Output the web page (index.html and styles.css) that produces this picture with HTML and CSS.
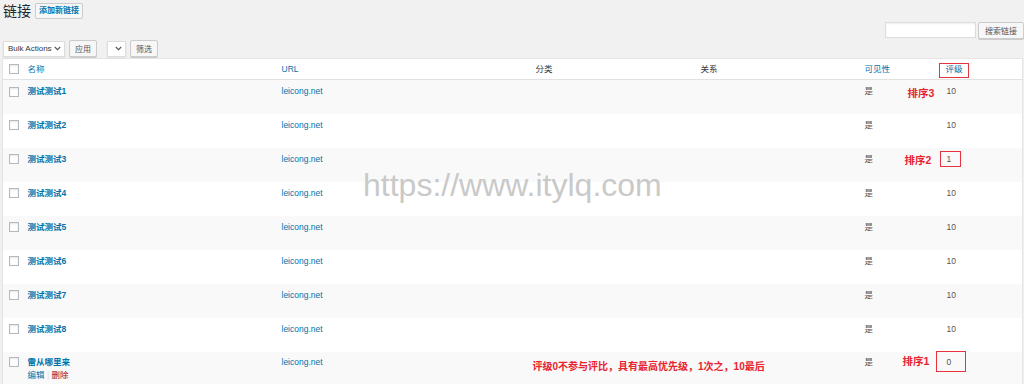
FILE: index.html
```html
<!DOCTYPE html>
<html lang="zh-CN">
<head>
    <meta charset="UTF-8">
    <title>链接</title>
    <link rel="stylesheet" href="styles.css">
</head>
<body>
    <div class="wrap">
        <div class="title-row">
            <h1>链接</h1>
            <a class="add-new">添加新链接</a>
        </div>

        <div class="search-row">
            <input class="search-input" type="text">
            <span class="btn">搜索链接</span>
        </div>

        <div class="tablenav">
            <span class="select bulk">Bulk Actions
                <svg width="7" height="5" viewBox="0 0 7 5"><path d="M0.8 1 L3.5 3.7 L6.2 1" fill="none" stroke="#555" stroke-width="1.1"/></svg>
            </span>
            <span class="btn">应用</span>
            <span class="select cat">
                <svg width="7" height="5" viewBox="0 0 7 5"><path d="M0.8 1 L3.5 3.7 L6.2 1" fill="none" stroke="#555" stroke-width="1.1"/></svg>
            </span>
            <span class="btn">筛选</span>
        </div>

        <table class="links">
            <colgroup>
                <col class="c-cb">
                <col class="c-name">
                <col class="c-url">
                <col class="c-cat">
                <col class="c-rel">
                <col class="c-vis">
                <col class="c-rate">
            </colgroup>
            <thead>
                <tr>
                    <th><span class="cb"></span></th>
                    <th class="link">名称</th>
                    <th class="link">URL</th>
                    <th>分类</th>
                    <th>关系</th>
                    <th class="link">可见性</th>
                    <th class="link"><span class="rate-head">评级<span class="mark mark-head"></span></span></th>
                </tr>
            </thead>
            <tbody>
                <tr>
                    <td><span class="cb"></span></td>
                    <td><a class="name">测试测试1</a></td>
                    <td><a class="url">leicong.net</a></td>
                    <td></td><td></td>
                    <td class="vis">是<span class="note note-3">排序3</span></td>
                    <td class="rate">10</td>
                </tr>
                <tr>
                    <td><span class="cb"></span></td>
                    <td><a class="name">测试测试2</a></td>
                    <td><a class="url">leicong.net</a></td>
                    <td></td><td></td>
                    <td class="vis">是</td>
                    <td class="rate">10</td>
                </tr>
                <tr>
                    <td><span class="cb"></span></td>
                    <td><a class="name">测试测试3</a></td>
                    <td><a class="url">leicong.net</a></td>
                    <td></td><td></td>
                    <td class="vis">是<span class="note note-2">排序2</span></td>
                    <td class="rate"><span class="rate-val">1<span class="mark mark-2"></span></span></td>
                </tr>
                <tr>
                    <td><span class="cb"></span></td>
                    <td><a class="name">测试测试4</a></td>
                    <td><a class="url">leicong.net</a></td>
                    <td></td><td></td>
                    <td class="vis">是</td>
                    <td class="rate">10</td>
                </tr>
                <tr>
                    <td><span class="cb"></span></td>
                    <td><a class="name">测试测试5</a></td>
                    <td><a class="url">leicong.net</a></td>
                    <td></td><td></td>
                    <td class="vis">是</td>
                    <td class="rate">10</td>
                </tr>
                <tr>
                    <td><span class="cb"></span></td>
                    <td><a class="name">测试测试6</a></td>
                    <td><a class="url">leicong.net</a></td>
                    <td></td><td></td>
                    <td class="vis">是</td>
                    <td class="rate">10</td>
                </tr>
                <tr>
                    <td><span class="cb"></span></td>
                    <td><a class="name">测试测试7</a></td>
                    <td><a class="url">leicong.net</a></td>
                    <td></td><td></td>
                    <td class="vis">是</td>
                    <td class="rate">10</td>
                </tr>
                <tr>
                    <td><span class="cb"></span></td>
                    <td><a class="name">测试测试8</a></td>
                    <td><a class="url">leicong.net</a></td>
                    <td></td><td></td>
                    <td class="vis">是</td>
                    <td class="rate">10</td>
                </tr>
                <tr class="last">
                    <td><span class="cb"></span></td>
                    <td>
                        <a class="name">雷从哪里来</a>
                        <div class="row-actions"><a class="edit">编辑</a> <span class="sep">|</span> <a class="delete">删除</a></div>
                    </td>
                    <td><a class="url">leicong.net</a></td>
                    <td colspan="2"><span class="note-long">评级0不参与评比，具有最高优先级，1次之，10最后</span></td>
                    <td class="vis">是<span class="note note-1">排序1</span></td>
                    <td class="rate"><span class="rate-val">0<span class="mark mark-1"></span></span></td>
                </tr>
            </tbody>
        </table>

        <div class="watermark">https://www.itylq.com</div>
    </div>
</body>
</html>
```

FILE: styles.css
```css
body {
    margin: 0;
    background: #f1f1f1;
    color: #444;
    font-family: "Liberation Sans", "Noto Sans CJK SC", sans-serif;
    font-size: 8.5px;
    overflow: hidden;
}
.wrap {
    position: relative;
    padding: 0 2px 0 2px;
}
a {
    color: #0073aa;
    text-decoration: none;
}

/* title */
.title-row {
    display: flex;
    align-items: center;
    height: 21px;
    padding-left: 1px;
}
h1 {
    margin: 0;
    font-size: 14px;
    font-weight: 400;
    color: #23282d;
    line-height: 20px;
}
.add-new {
    margin-left: 4px;
    height: 14px;
    line-height: 14px;
    padding: 0 3px;
    border: 1px solid #ccc;
    border-radius: 2px;
    background: #f7f7f7;
    font-weight: 600;
    font-size: 8px;
}

/* search */
.search-row {
    display: flex;
    justify-content: flex-end;
    align-items: center;
    gap: 4px;
    height: 18px;
    margin-right: -2px;
}
.search-input {
    box-sizing: border-box;
    width: 91px;
    height: 16px;
    border: 1px solid #ddd;
    background: #fff;
    box-shadow: inset 0 1px 2px rgba(0,0,0,.07);
    margin: 0 -2px 0 0;
}
.btn {
    display: inline-flex;
    align-items: center;
    box-sizing: border-box;
    height: 17px;
    padding: 0 6px;
    border: 1px solid #ccc;
    border-radius: 2px;
    background: #f7f7f7;
    color: #555;
    font-size: 8px;
    box-shadow: 0 1px 0 #ccc;
}

/* tablenav */
.tablenav {
    display: flex;
    align-items: center;
    height: 19px;
    padding-left: 1px;
}
.select {
    display: inline-flex;
    align-items: center;
    justify-content: space-between;
    box-sizing: border-box;
    height: 16px;
    padding: 0 3px 0 4px;
    border: 1px solid #ddd;
    background: #fff;
    color: #32373c;
    font-size: 8px;
    box-shadow: 0 1px 2px rgba(0,0,0,.07);
}
.select.bulk {
    width: 62px;
    margin-right: 4px;
}
.select.cat {
    width: 19px;
    margin-left: 10px;
    margin-right: 4px;
    justify-content: flex-end;
}
.tablenav .btn {
    padding: 0 5px;
}

/* table */
.links {
    margin-top: 0;
    width: 1020px;
    table-layout: fixed;
    border-collapse: collapse;
    border: 1px solid #e5e5e5;
    background: #fff;
    box-shadow: 0 1px 1px rgba(0,0,0,.04);
}
.c-cb { width: 20px; }
.c-name { width: 254px; }
.c-url { width: 254px; }
.c-cat { width: 165px; }
.c-rel { width: 164px; }
.c-vis { width: 81px; }
.c-rate { width: 82px; }

th, td {
    text-align: left;
    vertical-align: top;
    padding: 0 0 0 5px;
    font-weight: 400;
}
th {
    height: 20px;
    line-height: 20px;
    color: #32373c;
    border-bottom: 1px solid #e1e1e1;
}
th.link {
    color: #0073aa;
}
th:first-child, td:first-child {
    padding-left: 6px;
}
td {
    height: 34px;
    box-sizing: border-box;
    padding-top: 6px;
    line-height: 11px;
}
tbody tr:nth-child(odd) {
    background: #f9f9f9;
}
.cb {
    display: inline-block;
    box-sizing: border-box;
    width: 10px;
    height: 10px;
    border: 1px solid #b4b9be;
    background: #fff;
    box-shadow: inset 0 1px 2px rgba(0,0,0,.1);
    vertical-align: middle;
}
th .cb {
    margin-top: -2px;
}
.name {
    font-weight: 700;
}
.vis, .rate {
    color: #555;
}
.rate {
    padding-left: 6px;
}
.last td {
    height: 36px;
    padding-top: 5px;
}
.row-actions {
    margin-top: 2px;
}
.sep {
    color: #ddd;
}
.delete {
    color: #a00;
}

/* annotations laid over the table */
.vis, .rate-head, .rate-val {
    position: relative;
}
.note {
    position: absolute;
    color: #e8232f;
    font-weight: 700;
    font-size: 10.5px;
    line-height: 12px;
    white-space: nowrap;
}
.note-3 { left: 48px; top: 7px; }
.note-2 { left: 45px; top: 6px; }
.note-1 { left: 43px; top: 3px; }
.note-long {
    display: inline-block;
    color: #e8232f;
    font-weight: 700;
    font-size: 10px;
    margin-top: 4px;
    margin-left: -3px;
}
.mark {
    position: absolute;
    border: 1.5px solid #e53340;
    box-sizing: border-box;
}
.mark-head { left: -7px; top: -1px; width: 30px; height: 15px; }
.mark-2 { left: -7px; top: -3px; width: 21px; height: 16px; }
.mark-1 { left: -11px; top: -6px; width: 30px; height: 21px; }

.watermark {
    position: absolute;
    left: 363px;
    top: 167px;
    font-family: "Liberation Sans", sans-serif;
    font-size: 32px;
    color: #c9c9c9;
    pointer-events: none;
}
```
